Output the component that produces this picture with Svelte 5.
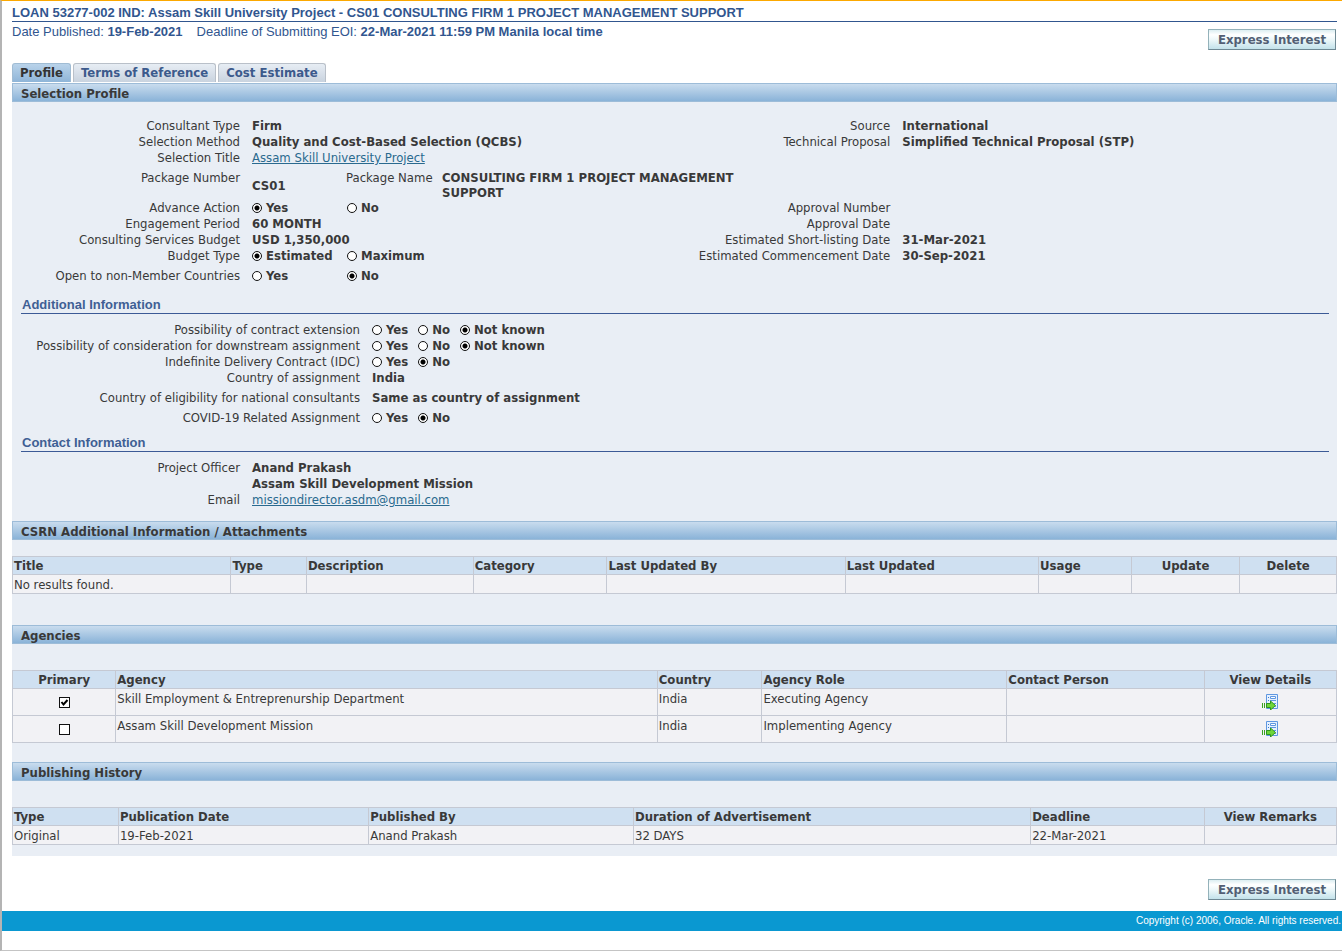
<script>
  const attachmentCols = [
    { title: 'Title', share: 16.5 },
    { title: 'Type', share: 5.7 },
    { title: 'Description', share: 12.6 },
    { title: 'Category', share: 10.1 },
    { title: 'Last Updated By', share: 18 },
    { title: 'Last Updated', share: 14.6 },
    { title: 'Usage', share: 7 },
    { title: 'Update', share: 8.2, center: true },
    { title: 'Delete', share: 7.3, center: true }
  ];
  const agencyCols = [
    { title: 'Primary', share: 7.8, center: true },
    { title: 'Agency', share: 40.9 },
    { title: 'Country', share: 7.9 },
    { title: 'Agency Role', share: 18.5 },
    { title: 'Contact Person', share: 14.9 },
    { title: 'View Details', share: 10, center: true }
  ];
  const historyCols = [
    { title: 'Type', share: 8 },
    { title: 'Publication Date', share: 18.9 },
    { title: 'Published By', share: 20 },
    { title: 'Duration of Advertisement', share: 30 },
    { title: 'Deadline', share: 13.1 },
    { title: 'View Remarks', share: 10, center: true }
  ];
  const agencies = [
    { name: 'Skill Employment & Entreprenurship Department', country: 'India', role: 'Executing Agency', primary: true },
    { name: 'Assam Skill Development Mission', country: 'India', role: 'Implementing Agency', primary: false }
  ];
</script>

{#snippet radios(name, label, options, selected)}
  <div class="radios" role="radiogroup" aria-label={label}>
    {#each options as option}
      <label><input type="radio" {name} value={option} checked={option === selected} />{option}</label>
    {/each}
  </div>
{/snippet}

{#snippet head(cols)}
  <colgroup>
    {#each cols as col}<col style="width: {col.share}%" />{/each}
  </colgroup>
  <thead>
    <tr>
      {#each cols as col}<th scope="col" class:center={col.center}>{col.title}</th>{/each}
    </tr>
  </thead>
{/snippet}

<div class="page">
  <header>
    <h1>LOAN 53277-002 IND: Assam Skill University Project - CS01 CONSULTING FIRM 1 PROJECT MANAGEMENT SUPPORT</h1>
    <div class="dates">
      <span>Date Published: <b>19-Feb-2021</b></span>
      <span>Deadline of Submitting EOI: <b>22-Mar-2021 11:59 PM Manila local time</b></span>
    </div>
  </header>
  <div class="actions top"><button class="express">Express Interest</button></div>

  <nav>
    <button class="tab active">Profile</button>
    <button class="tab">Terms of Reference</button>
    <button class="tab">Cost Estimate</button>
  </nav>

  <main>
    <h2>Selection Profile</h2>
    <div class="form profile">
      <div class="row">
        <span class="name">Consultant Type</span><b>Firm</b>
        <span class="name">Source</span><b>International</b>
      </div>
      <div class="row">
        <span class="name">Selection Method</span><b>Quality and Cost-Based Selection (QCBS)</b>
        <span class="name">Technical Proposal</span><b>Simplified Technical Proposal (STP)</b>
      </div>
      <div class="row">
        <span class="name">Selection Title</span><a href="#title">Assam Skill University Project</a>
      </div>
      <div class="row package">
        <span class="name">Package Number</span><b class="number">CS01</b>
        <span class="name">Package Name</span><b>CONSULTING FIRM 1 PROJECT MANAGEMENT SUPPORT</b>
      </div>
      <div class="row">
        <span class="name">Advance Action</span>{@render radios('advance', 'Advance Action', ['Yes', 'No'], 'Yes')}
        <span class="name">Approval Number</span>
      </div>
      <div class="row">
        <span class="name">Engagement Period</span><b>60 MONTH</b>
        <span class="name">Approval Date</span>
      </div>
      <div class="row">
        <span class="name">Consulting Services Budget</span><b>USD 1,350,000</b>
        <span class="name">Estimated Short-listing Date</span><b>31-Mar-2021</b>
      </div>
      <div class="row">
        <span class="name">Budget Type</span>{@render radios('budget', 'Budget Type', ['Estimated', 'Maximum'], 'Estimated')}
        <span class="name">Estimated Commencement Date</span><b>30-Sep-2021</b>
      </div>
      <div class="row spaced">
        <span class="name">Open to non-Member Countries</span>{@render radios('open', 'Open to non-Member Countries', ['Yes', 'No'], 'No')}
      </div>
    </div>

    <h3>Additional Information</h3>
    <div class="form additional">
      <div class="row">
        <span class="name">Possibility of contract extension</span>{@render radios('extension', 'Possibility of contract extension', ['Yes', 'No', 'Not known'], 'Not known')}
      </div>
      <div class="row">
        <span class="name">Possibility of consideration for downstream assignment</span>{@render radios('downstream', 'Possibility of consideration for downstream assignment', ['Yes', 'No', 'Not known'], 'Not known')}
      </div>
      <div class="row">
        <span class="name">Indefinite Delivery Contract (IDC)</span>{@render radios('idc', 'Indefinite Delivery Contract (IDC)', ['Yes', 'No'], 'No')}
      </div>
      <div class="row"><span class="name">Country of assignment</span><b>India</b></div>
      <div class="row spaced"><span class="name">Country of eligibility for national consultants</span><b>Same as country of assignment</b></div>
      <div class="row spaced">
        <span class="name">COVID-19 Related Assignment</span>{@render radios('covid', 'COVID-19 Related Assignment', ['Yes', 'No'], 'No')}
      </div>
    </div>

    <h3>Contact Information</h3>
    <div class="form contact">
      <div class="row"><span class="name">Project Officer</span><b>Anand Prakash<br />Assam Skill Development Mission</b></div>
      <div class="row"><span class="name">Email</span><a href="mailto:missiondirector.asdm@gmail.com">missiondirector.asdm@gmail.com</a></div>
    </div>

    <h2>CSRN Additional Information / Attachments</h2>
    <table class="attachments">
      {@render head(attachmentCols)}
      <tbody>
        <tr><td>No results found.</td>{#each attachmentCols.slice(1) as _}<td></td>{/each}</tr>
      </tbody>
    </table>

    <h2>Agencies</h2>
    <table class="agencies">
      {@render head(agencyCols)}
      <tbody>
        {#each agencies as agency}
          <tr>
            <td class="center"><input type="checkbox" checked={agency.primary} aria-label="Primary" /></td>
            <td>{agency.name}</td>
            <td>{agency.country}</td>
            <td>{agency.role}</td>
            <td></td>
            <td class="center">
              <button class="details" aria-label="View Details">
                <svg width="16" height="16" viewBox="0 0 16 16">
                  <path d="M4.500.5h11v14h-11z" fill="#e6f1ff" stroke="#5f97e0" />
                  <path d="M6 3h1v1H6zM6 6h1v1H6z" fill="#3a78cc" />
                  <path d="M8.500 2.500h5v2h-5z" fill="#fff" stroke="#5f97e0" />
                  <path d="M8 6h6v1H8zM12 9h2v1h-2zM13 12h1v1h-1z" fill="#5f97e0" />
                  <path d="M0 9h1v5H0zM2 9h1v5H2z" fill="#39a221" />
                  <path d="M4.500 9.500h4v-2.500l5 4.500-5 4.500v-2.500h-4z" fill="#6fd63a" stroke="#2f941f" />
                </svg>
              </button>
            </td>
          </tr>
        {/each}
      </tbody>
    </table>

    <h2>Publishing History</h2>
    <table class="history">
      {@render head(historyCols)}
      <tbody>
        <tr><td>Original</td><td>19-Feb-2021</td><td>Anand Prakash</td><td>32 DAYS</td><td>22-Mar-2021</td><td></td></tr>
      </tbody>
    </table>
  </main>

  <div class="actions bottom"><button class="express">Express Interest</button></div>
  <footer>Copyright (c) 2006, Oracle. All rights reserved.</footer>
</div>

<style>
  :global(body) { background: #fff; }
  .page {
    box-sizing: border-box;
    border-top: 1px solid #fca800;
    border-left: 2px solid #b4b4b4;
    border-bottom: 1px solid #c4c4c4;
    padding-bottom: 19px;
    color: #393939;
    font: 13px/16px "DejaVu Sans Condensed", "DejaVu Sans", sans-serif;
  }
  h1, h2, h3 { margin: 0; font-size: 13px; }
  header, nav, main { margin: 0 5px 0 10px; }
  header { color: #31568f; font-family: "Liberation Sans", Arial, sans-serif; }
  h1 { padding: 4px 0 0; line-height: 16px; border-bottom: 1px solid #31568f; }
  .dates { display: flex; gap: 14px; padding-top: 2px; height: 5px; line-height: 16px; white-space: nowrap; }
  .actions { display: flex; justify-content: flex-end; padding-right: 6px; }
  .bottom { padding-top: 23px; padding-bottom: 11px; }
  .express {
    height: 21px;
    width: 128px;
    padding: 0;
    border: 1px solid;
    border-color: #94b2ba #6f8994 #6f8994 #94b2ba;
    background: linear-gradient(#dceef1, #fff 25%, #eaf6f8 55%, #c3e2ea);
    color: #525f74;
    font: bold 13px/18px "DejaVu Sans Condensed", "DejaVu Sans", sans-serif;
  }
  nav { display: flex; gap: 2px; padding-top: 13px; height: 20px; }
  .tab {
    height: 19px;
    padding: 0 7px;
    border: 1px solid #b9c0c9;
    border-bottom: 0;
    border-radius: 3px 3px 0 0;
    background: linear-gradient(#e7edf4, #c9d3df);
    color: #3c5a8c;
    font: bold 13px/18px "DejaVu Sans Condensed", "DejaVu Sans", sans-serif;
  }
  .active { background: linear-gradient(#b9d3ea, #8fb5d8); border-color: #a0bcd4; color: #333; }
  main { background: #e9eef5; padding-bottom: 11px; }
  h2 {
    height: 17px;
    padding-left: 8px;
    border: 1px solid #9dbcd8;
    background: linear-gradient(#c9dcee, #8ab3d8);
    line-height: 19px;
  }
  h3 {
    margin: 0 8px 0 9px;
    padding-left: 1px;
    border-bottom: 1px solid #3c5a96;
    color: #3f5f94;
    font-family: "Liberation Sans", Arial, sans-serif;
  }
  .row { display: grid; column-gap: 12px; }
  .profile { padding: 16px 0 13px; }
  .profile .row { grid-template-columns: 228px calc(49% - 251px) 228px 1fr; }
  .profile .package { grid-template-columns: 228px 82px 84px 312px; padding-top: 4px; line-height: 15px; }
  .number { align-self: center; }
  .additional { padding: 8px 0 9px; }
  .additional .row { grid-template-columns: 348px 1fr; }
  .contact { padding: 8px 0 13px; }
  .contact .row { grid-template-columns: 228px 1fr; }
  .name { text-align: right; white-space: nowrap; }
  .form .spaced { padding-top: 4px; }
  .radios { display: flex; gap: 10px; font-weight: bold; }
  .profile .radios { display: grid; grid-template-columns: 85px 1fr; }
  .radios label { display: flex; align-items: center; gap: 4px; white-space: nowrap; }
  input { appearance: none; box-sizing: border-box; margin: 0; background: #fff; border: 1px solid #111; }
  input[type='radio'] { width: 10px; height: 10px; border-radius: 50%; }
  input[type='radio']:checked { background: radial-gradient(circle, #000 2px, #fff 3px); }
  input[type='checkbox'] { display: block; width: 11px; height: 11px; margin: 6px auto 0; }
  input[type='checkbox']:checked {
    background: url("data:image/svg+xml,%3Csvg xmlns='http://www.w3.org/2000/svg' viewBox='0 0 9 9'%3E%3Cpath d='M1.500 4l2 2.500L7.500 2' fill='none' stroke='%23000' stroke-width='2'/%3E%3C/svg%3E") #fff;
  }
  a { color: #2a6a8f; justify-self: start; }
  table { width: 100%; table-layout: fixed; border-collapse: collapse; }
  th, td { border: 1px solid #c5c9d3; padding: 1px 1px 0; text-align: left; vertical-align: top; white-space: nowrap; }
  th { background: #cfe0f1; }
  td { background: #f2f2f5; padding-top: 2px; height: 16px; }
  th.center, td.center { text-align: center; }
  .attachments { margin: 16px 0 31px; }
  .agencies { margin: 26px 0 19px; }
  .agencies td { height: 24px; }
  .history { margin-top: 26px; }
  .details { display: block; margin: 3px auto 0; padding: 0; border: 0; background: none; height: 16px; }
  .details svg { display: block; }
  footer {
    background: #0a98d1;
    color: #fff;
    padding-right: 1px;
    text-align: right;
    font: 10px/20px "Liberation Sans", Arial, sans-serif;
  }
</style>
